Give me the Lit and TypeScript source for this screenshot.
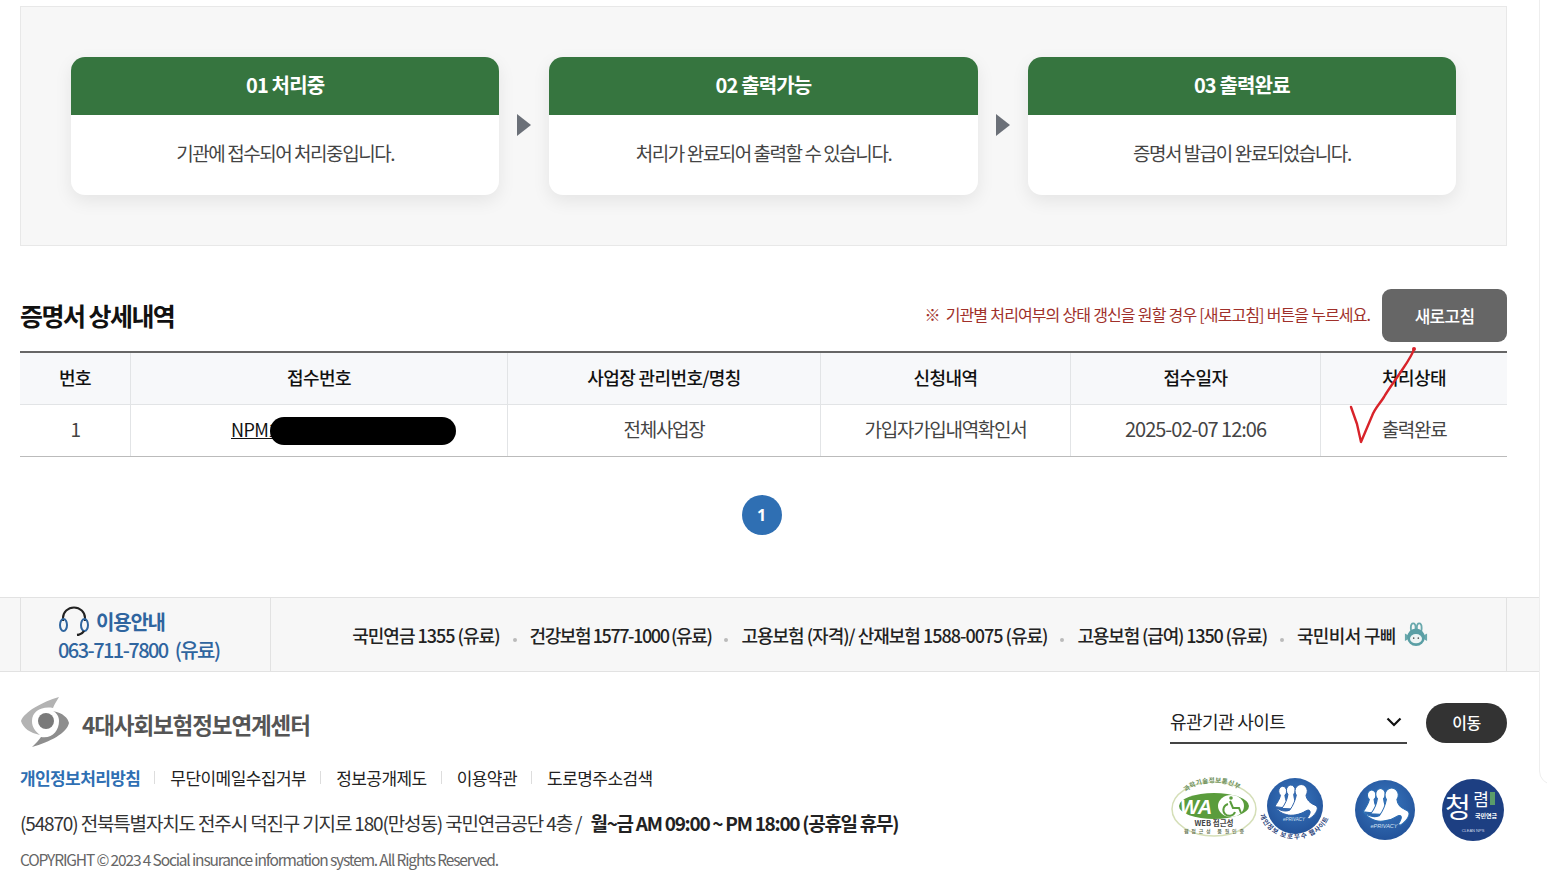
import { LitElement, html, css, svg } from "lit";
import { customElement } from "lit/decorators.js";

const FONT = css`"Noto Sans CJK KR", "Noto Sans", sans-serif`;

@customElement("app-root")
export class AppRoot extends LitElement {
  static styles = css`
    :host { display: block; position: relative; width: 1547px; height: 883px; overflow: hidden; background: #fff; font-family: ${FONT}; color: #333; }
    * { box-sizing: border-box; }
    .wrap { padding: 6px 40px 0 20px; }
    .steps { height: 240px; border: 1px solid #e8e8e8; background: #f7f7f7; padding: 50px 50px 0; display: flex; align-items: flex-start; }
    .card { flex: 1 1 0; height: 138px; border-radius: 14px; background: #fff; box-shadow: 0 6px 18px rgba(0,0,0,.08); overflow: hidden; }
    .card h3 { margin: 0; height: 58px; background: #36753f; color: #fff; font-size: 20px; font-weight: 700; letter-spacing: -.85px; line-height: 55px; text-align: center; }
    .card p { margin: 0; height: 80px; line-height: 76px; text-align: center; font-size: 19px; letter-spacing: -1.45px; color: #444; }
    .arrow { flex: none; width: 50px; height: 136px; display: flex; justify-content: center; align-items: center; }
    .arrow i { display: block; width: 0; height: 0; border-left: 14px solid #6b7078; border-top: 11px solid transparent; border-bottom: 11px solid transparent; }
    .head { display: flex; align-items: center; height: 53px; margin-top: 43px; }
    .head h2 { margin: 0 0 2px; flex: 1; font-size: 25px; font-weight: 700; letter-spacing: -1.55px; color: #111; }
    .note { font-size: 16px; letter-spacing: -.92px; color: #a0302a; margin: 0 12px 4px 0; word-spacing: .5px; }
    .note i { font-style: normal; margin-right: 3px; }
    .refresh { width: 125px; height: 53px; border-radius: 9px; background: #666; color: #fff; font-size: 17px; font-weight: 500; letter-spacing: -.75px; display: flex; align-items: center; justify-content: center; }
    .tbl { margin-top: 9px; border-top: 2px solid #666; border-bottom: 1px solid #bbb; }
    .row { display: grid; grid-template-columns: 110px 377px 313px 250px 250px 187px; }
    .row.th { background: #f7f8fa; border-bottom: 1px solid #e2e4e6; font-size: 18px; font-weight: 500; color: #111; letter-spacing: -.6px; height: 52px; }
    .row.td { height: 51px; font-size: 19px; letter-spacing: -1.3px; color: #444; }
    .cell { display: flex; align-items: center; justify-content: center; border-left: 1px solid #e2e4e6; position: relative; padding-bottom: 4px; }
    .cell:first-child { border-left: 0; }
    .date { font-size: 20px; letter-spacing: -1px; }
    .npm { position: absolute; left: 100px; color: #111; text-decoration: underline; font-size: 18px; letter-spacing: -.6px; white-space: nowrap; }
    .mask { position: absolute; left: 139px; top: 12px; width: 186px; height: 28px; border-radius: 14px; background: #000; }
    .pager { display: flex; justify-content: center; margin-top: 38px; height: 40px; padding-right: 4px; }
    .pager span { width: 40px; height: 40px; border-radius: 50%; background: #2f6fb3; color: #fff; font-size: 16px; font-weight: 700; display: flex; align-items: center; justify-content: center; font-family: "Noto Sans", sans-serif; }
    .band { margin-top: 62px; height: 75px; width: 1539px; background: #f7f7f7; border-top: 1px solid #e2e2e2; border-bottom: 1px solid #e2e2e2; padding-left: 20px; }
    .band-in { width: 1487px; height: 73px; display: flex; border-left: 1px solid #e2e2e2; border-right: 1px solid #e2e2e2; }
    .info { width: 250px; flex: none; border-right: 1px solid #e2e2e2; padding: 8px 0 0 37px; color: #2f659f; font-weight: 700; }
    .info .t { display: flex; align-items: center; gap: 6px; font-size: 20px; letter-spacing: -1.2px; line-height: 29px; }
    .info .n { font-size: 20px; font-weight: 500; letter-spacing: -1.55px; line-height: 28px; word-spacing: 4px; }
    .tels { flex: 1; display: flex; align-items: center; justify-content: center; font-size: 18px; font-weight: 500; letter-spacing: -1.15px; color: #222; white-space: nowrap; padding-left: 3px; }
    .tels .a { letter-spacing: -1.42px; }
    .tels .b { letter-spacing: -1px; }
    .tels .c { letter-spacing: -.65px; }
    .dot { width: 4px; height: 4px; border-radius: 50%; background: #bbb; margin: 10px 13px 0; }
    .foot { display: flex; justify-content: space-between; height: 212px; width: 1487px; }
    .fl { padding-top: 25px; }
    .logo { display: flex; align-items: center; gap: 12px; height: 52px; font-size: 22.5px; font-weight: 700; color: #555; letter-spacing: -1.1px; }
    .logo span { padding-top: 2px; }
    .links { display: flex; align-items: center; margin-top: 15px; height: 26px; font-size: 17px; letter-spacing: -.55px; color: #222; }
    .links b { color: #2f6fb3; font-weight: 700; letter-spacing: -.6px; }
    .links u { display: block; text-decoration: none; width: 1px; height: 13px; background: #ddd; margin: 0 15px 0 14px; }
    .addr { margin-top: 20px; font-size: 19px; letter-spacing: -1.15px; color: #333; line-height: 26px; white-space: nowrap; }
    .addr b { font-weight: 700; color: #222; letter-spacing: -1.28px; margin-left: 6px; }
    .copy { margin-top: 12px; font-size: 15.5px; letter-spacing: -1.14px; color: #666; line-height: 22px; }
    .fr { width: 337px; padding-top: 31px; }
    .sel { display: flex; gap: 19px; align-items: flex-start; }
    .select { width: 237px; height: 41px; border-bottom: 2px solid #444; display: flex; justify-content: space-between; align-items: center; font-size: 18px; letter-spacing: -.6px; color: #222; padding: 0 5px 4px 0; }
    .select svg { margin-top: 2px; }
    .go { width: 81px; height: 40px; border-radius: 20px; background: #333; color: #fff; font-size: 16px; font-weight: 500; letter-spacing: -.5px; display: flex; align-items: center; justify-content: center; padding-bottom: 2px; }
    .marks { display: flex; margin-top: 33px; height: 66px; align-items: center; }
    .marks svg { display: block; flex: none; overflow: visible; }
    .m2 { margin-left: 1px; }
    .m3 { margin-left: 11px; }
    .m4 { margin-left: 4px; }
    .edge { position: absolute; left: 1539px; top: -20px; width: 60px; height: 805px; border: 1px solid #eee; border-radius: 14px; }
    .check { position: absolute; left: 1340px; top: 340px; pointer-events: none; }
    .rabbit { margin-left: 8px; flex: none; }
  `;

  private headset() {
    return html`<svg width="32" height="30" viewBox="0 0 32 30" fill="none" stroke="#2f659f" stroke-width="2">
      <path d="M5 15V12a11 10.500 0 0 1 22 0v3" stroke="#222"/><ellipse cx="5.500" cy="19" rx="3.500" ry="6"/><ellipse cx="26.500" cy="19" rx="3.500" ry="6"/>
      <path d="M26 25q-2 3.500-7 4" stroke="#222" stroke-width="2.500"/></svg>`;
  }

  private rabbit() {
    return html`<svg class="rabbit" width="24" height="25" viewBox="0 0 26 26">
      <ellipse cx="10" cy="6" rx="2.600" ry="5" fill="none" stroke="#6aa9ad" stroke-width="2"/><ellipse cx="16.500" cy="6" rx="2.600" ry="5" fill="none" stroke="#6aa9ad" stroke-width="2"/>
      <path d="M1 12l4 2v4l-4 2zM25 12l-4 2v4l4 2z" fill="#6aa9ad"/>
      <circle cx="13" cy="16" r="9.500" fill="#5b9fa5"/><ellipse cx="13" cy="17.500" rx="6.500" ry="5" fill="#eef4f4"/><circle cx="10.500" cy="17" r=".9" fill="#555"/><circle cx="15.500" cy="17" r=".9" fill="#555"/></svg>`;
  }

  private people(cx: number, cy: number, s: number, c: string) {
    return svg`<g transform="translate(${cx} ${cy}) scale(${s})" fill="#fff" stroke="${c}" stroke-width="1.100">
      <path d="M-23 3C-20-2-17-6-16.500-10A4.500 5.500 0 1 1-11.500-10C-11-5-9 0-6 5Z"/>
      <path d="M-15 5C-11 0-8.500-6-8-11A5 6 0 1 1-1.500-11C-1-5 1 0 4 6Z"/>
      <path d="M-6 7C-2 2 .5-5 1.500-10A7 7.500 0 1 1 12.500-10C13-5 17-1 22 1 25 2 26 4 25 7 24 10 21 14 16 17L14 16C16 13 18 10 17 8 16 6 14 7 12 8 6 12-4 14-10 12-15 11-19 8-23 3-17 8-11 9-6 7Z"/></g>`;
  }

  render() {
    return html`
      <div class="wrap">
        <section class="steps">
          <div class="card"><h3>01 처리중</h3><p>기관에 접수되어 처리중입니다.</p></div>
          <div class="arrow"><i></i></div>
          <div class="card"><h3>02 출력가능</h3><p>처리가 완료되어 출력할 수 있습니다.</p></div>
          <div class="arrow"><i></i></div>
          <div class="card"><h3>03 출력완료</h3><p>증명서 발급이 완료되었습니다.</p></div>
        </section>
        <div class="head">
          <h2>증명서 상세내역</h2>
          <span class="note"><i>※</i> 기관별 처리여부의 상태 갱신을 원할 경우 [새로고침] 버튼을 누르세요.</span>
          <div class="refresh">새로고침</div>
        </div>
        <div class="tbl">
          <div class="row th">
            <div class="cell">번호</div><div class="cell">접수번호</div><div class="cell">사업장 관리번호/명칭</div><div class="cell">신청내역</div><div class="cell">접수일자</div><div class="cell">처리상태</div>
          </div>
          <div class="row td">
            <div class="cell">1</div>
            <div class="cell"><span class="npm">NPM1</span><span class="mask"></span></div>
            <div class="cell">전체사업장</div><div class="cell">가입자가입내역확인서</div><div class="cell"><span class="date">2025-02-07 12:06</span></div><div class="cell">출력완료</div>
          </div>
        </div>
        <div class="pager"><span>1</span></div>
      </div>
      <div class="band"><div class="band-in">
        <div class="info">
          <div class="t">${this.headset()}<span>이용안내</span></div>
          <div class="n">063-711-7800 (유료)</div>
        </div>
        <div class="tels">
          <span class="b">국민연금 1355 (유료)</span><span class="dot"></span>
          <span class="a">건강보험 1577-1000 (유료)</span><span class="dot"></span>
          <span class="b">고용보험 (자격)/ 산재보험 1588-0075 (유료)</span><span class="dot"></span>
          <span>고용보험 (급여) 1350 (유료)</span><span class="dot"></span>
          <span class="c">국민비서 구삐</span>${this.rabbit()}
        </div>
      </div></div>
      <div class="wrap" style="padding-top:0">
        <footer class="foot">
          <div class="fl">
            <div class="logo">
              <svg width="50" height="52" viewBox="0 0 50 52">
                <path d="M1 24C4 15 22 5 39 0 36 5 34 8 33 11 22 9 12 14 12 24c0 6 3 10 8 14C10 36 3 31 1 24z" fill="#b3b3b3"/>
                <path d="M49 26C47 36 30 45 12 50c4-4 7-7 9-10 11 2 18-6 18-16 0-4-2-8-6-10 10 2 15 7 16 12z" fill="#8e8e8e"/>
                <circle cx="26" cy="24" r="8" fill="#7a7a7a"/>
              </svg>
              <span>4대사회보험정보연계센터</span>
            </div>
            <div class="links"><b>개인정보처리방침</b><u></u><span>무단이메일수집거부</span><u></u><span>정보공개제도</span><u></u><span>이용약관</span><u></u><span>도로명주소검색</span></div>
            <div class="addr">(54870) 전북특별자치도 전주시 덕진구 기지로 180(만성동) 국민연금공단 4층 / <b>월~금 AM 09:00 ~ PM 18:00 (공휴일 휴무)</b></div>
            <div class="copy">COPYRIGHT © 2023 4 Social insurance information system. All Rights Reserved.</div>
          </div>
          <div class="fr">
            <div class="sel">
              <div class="select"><span>유관기관 사이트</span>
                <svg width="16" height="10" viewBox="0 0 16 10" fill="none" stroke="#111" stroke-width="2.200"><path d="M1.500 1.500L8 8l6.500-6.500"/></svg></div>
              <div class="go">이동</div>
            </div>
            <div class="marks">
              <svg width="90" height="66" viewBox="0 0 90 66">
                <defs><path id="waTop" d="M16 15A34 22 0 0 1 72 15"/></defs>
                <ellipse cx="44" cy="32" rx="42" ry="27" fill="#fff" stroke="#d5dfb8" stroke-width="1.500"/>
                <text font-size="6.500" font-weight="700" fill="#6d8f5a"><textPath href="#waTop" textLength="56">과학기술정보통신부</textPath></text>
                <ellipse cx="44" cy="29" rx="35" ry="13" fill="#5a9c3c"/>
                <text x="26" y="37" font-size="20" font-weight="700" font-style="italic" fill="#fff" text-anchor="middle" font-family="Liberation Sans">WA</text>
                <ellipse cx="61" cy="29" rx="13" ry="11" fill="#fff"/>
                <circle cx="61" cy="21" r="1.800" fill="#5a9c3c"/>
                <path d="M60 24l3 7h6l2 5M58 27a6 6 0 1 0 7 8" fill="none" stroke="#5a9c3c" stroke-width="2"/>
                <text x="44" y="49" font-size="7.500" font-weight="700" fill="#444" text-anchor="middle">WEB 접근성</text>
                <text x="44" y="56" font-size="5" font-weight="500" fill="#5b6b4a" text-anchor="middle" textLength="60">웹접근성 품질인증</text>
              </svg>
              <svg class="m2" width="76" height="66" viewBox="0 0 76 66">
                <defs>
                  <radialGradient id="bl1" cx=".5" cy=".4" r=".7"><stop offset="0" stop-color="#3a78c0"/><stop offset="1" stop-color="#1f4d94"/></radialGradient>
                  <path id="arcL" d="M-1 38A36 33 0 0 0 18.800 58.900"/>
                  <path id="arcC" d="M18.800 58.900A36 33 0 0 0 49.200 58.900"/>
                  <path id="arcR" d="M49.200 58.900A36 33 0 0 0 69 38"/>
                </defs>
                <circle cx="34" cy="29" r="28" fill="url(#bl1)"/>${this.people(34, 27, .88, "#2a5ea6")}
                <text x="33" y="44" font-size="4.500" font-style="italic" fill="#d5e3f3" text-anchor="middle" font-family="Liberation Sans">ePRIVACY</text>
                <text font-size="6.500" font-weight="700" fill="#1f3d78"><textPath href="#arcL" textLength="26">개인정보</textPath></text>
                <text font-size="6.500" font-weight="700" fill="#1f3d78"><textPath href="#arcC" textLength="28">보호우수</textPath></text>
                <text font-size="6.500" font-weight="700" fill="#1f3d78"><textPath href="#arcR" textLength="26">웹사이트</textPath></text>
              </svg>
              <svg class="m3" width="88" height="66" viewBox="0 0 88 66">
                <circle cx="37" cy="33" r="30" fill="url(#bl1)"/>${this.people(37, 32, .95, "#2a6cb2")}
                <text x="36" y="51" font-size="5.500" font-style="italic" fill="#d5e3f3" text-anchor="middle" font-family="Liberation Sans">ePRIVACY</text>
              </svg>
              <svg class="m4" width="66" height="66" viewBox="0 0 66 66">
                <circle cx="33" cy="33" r="31" fill="#1d3f82"/>
                <text x="18" y="41" font-size="28" font-weight="400" fill="#fff" text-anchor="middle">청</text>
                <text x="41" y="29" font-size="17" font-weight="400" fill="#fff" text-anchor="middle">렴</text>
                <rect x="50" y="15" width="5" height="13" fill="#5a9c6a"/>
                <text x="46" y="41" font-size="6" font-weight="700" fill="#fff" text-anchor="middle">국민연금</text>
                <text x="33" y="55" font-size="4" fill="#cfd8ea" text-anchor="middle" font-family="Liberation Sans">CLEAN NPS</text>
              </svg>
            </div>
          </div>
        </footer>
      </div>
      <div class="edge"></div>
      <svg class="check" width="90" height="110" viewBox="0 0 90 110" fill="none" stroke="#d8232a" stroke-linecap="round" stroke-linejoin="round">
        <path d="M74 9C72 16 66 24 60 33 54 42 48 50 44 57 39 65 35 68 32 76L21 102 17 84 11 67" stroke-width="2.400"/>
        <circle cx="74" cy="9" r="2" fill="#d8232a" stroke="none"/>
      </svg>
    `;
  }
}
